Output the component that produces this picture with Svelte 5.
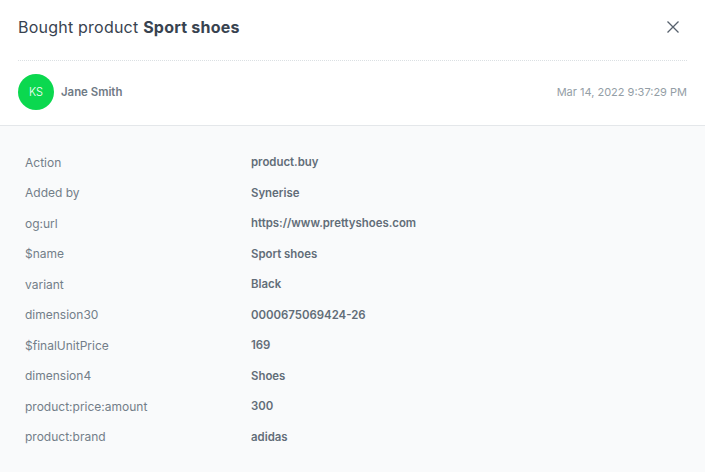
<script>
  const rows = [
    ['Action', 'product.buy'],
    ['Added by', 'Synerise'],
    ['og:url', 'https://www.prettyshoes.com'],
    ['$name', 'Sport shoes'],
    ['variant', 'Black'],
    ['dimension30', '0000675069424-26'],
    ['$finalUnitPrice', '169'],
    ['dimension4', 'Shoes'],
    ['product:price:amount', '300'],
    ['product:brand', 'adidas']
  ];
</script>

<div class="drawer">
  <header class="head">
    <div class="title-row">
      <h1>Bought product <strong>Sport shoes</strong></h1>
      <button class="close" aria-label="Close">
        <svg width="14" height="14" viewBox="0 0 14 14" fill="none">
          <path d="M1.5 1.5l11 11M12.5 1.5l-11 11" stroke="#57616d" stroke-width="1.3" />
        </svg>
      </button>
    </div>
    <div class="author-row">
      <div class="avatar">KS</div>
      <span class="name">Jane Smith</span>
      <span class="date">Mar 14, 2022 9:37:29 PM</span>
    </div>
  </header>
  <div class="props">
    {#each rows as [label, value]}
      <div class="label">{label}</div>
      <div class="value">{value}</div>
    {/each}
  </div>
</div>

<style>
  :global(body) {
    background: #f9fafb;
    font-family: Inter, "Liberation Sans", sans-serif;
  }

  .drawer {
    width: 705px;
    height: 472px;
    display: flex;
    flex-direction: column;
    overflow: hidden;
  }

  .head {
    background: #fff;
    border-bottom: 1px solid #e4e7ea;
    padding: 0 18px;
    height: 126px;
    box-sizing: border-box;
    flex: none;
  }

  .title-row {
    height: 61px;
    display: flex;
    align-items: center;
    justify-content: space-between;
    padding-bottom: 7px;
    box-sizing: border-box;
    border-bottom: 1px dotted #dbe0e3;
  }

  h1 {
    margin: 0;
    font-size: 16px;
    font-weight: 400;
    letter-spacing: 0.22px;
    color: #384350;
  }

  h1 strong {
    font-weight: 700;
  }

  .close {
    border: 0;
    background: none;
    padding: 0;
    display: flex;
    margin-right: 7px;
  }

  .author-row {
    display: flex;
    align-items: center;
    height: 62px;
    font-size: 11px;
  }

  .avatar {
    width: 36px;
    height: 36px;
    border-radius: 50%;
    background: #0bd84f;
    color: #fff;
    display: flex;
    align-items: center;
    justify-content: center;
    font-size: 11px;
    font-weight: 300;
    margin-right: 7px;
  }

  .name {
    font-size: 11.4px;
    font-weight: 600;
    color: #6f7a85;
  }

  .date {
    margin-left: auto;
    color: #949ea6;
  }

  .props {
    display: grid;
    grid-template-columns: 226px 1fr;
    grid-auto-rows: 30.55px;
    align-items: center;
    padding: 20.8px 25px;
    font-size: 12px;
  }

  .label {
    color: #737e89;
  }

  .value {
    font-size: 11.4px;
    line-height: 16px;
    font-weight: 600;
    color: #626d78;
  }
</style>
